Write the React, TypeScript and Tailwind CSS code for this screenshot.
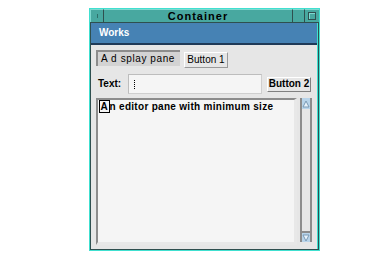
import React from "react";

export default function App() {
  const font = { fontFamily: '"Liberation Sans", "DejaVu Sans", sans-serif' };
  return (
    <div className="w-[379px] h-[255px] bg-white relative overflow-hidden" style={font}>
      <div className="absolute left-[89px] top-[8px] w-[231px] h-[243px] border border-[#40e0d0] bg-[#2f4f4f] flex flex-col">
        {/* title bar */}
        <div className="h-[14px] flex bg-[#48a8a0] border-b border-[#2f4f4f]">
          <div className="w-[14px] border-r border-[#2f4f4f] border-t border-t-[#7fd8d0] border-l border-l-[#7fd8d0] flex items-center justify-center">
            <div className="w-[1px] h-[4px] bg-[#2f6f6a]"></div>
          </div>
          <div className="flex-1 flex items-center justify-center border-t border-[#7fd8d0] border-r border-r-[#2f4f4f] text-[11px] font-bold text-black leading-none tracking-[1px]">
            Container
          </div>
          <div className="w-[12px] border-t border-[#7fd8d0] border-r border-r-[#2f4f4f]"></div>
          <div className="w-[14px] border-t border-[#7fd8d0] flex items-center justify-center">
            <div className="w-[8px] h-[8px] border border-[#2f4f4f] bg-[#48a8a0] shadow-[inset_1px_1px_0_#7fd8d0]"></div>
          </div>
        </div>
        {/* body */}
        <div className="flex-1 mx-[1px] mb-[1px] border-r border-[#40e0d0] bg-[#e6e6e6] flex flex-col">
          <div className="h-[22px] bg-[#4682b4] border-b-2 border-[#1f3a57] flex items-center pl-[8px] text-white text-[10px] font-bold leading-none">
            Works
          </div>
          <div className="flex-1 flex flex-col px-[5px] pt-[5px] pb-[4px]">
            <div className="flex items-start gap-[4px] h-[20px]">
              <div className="w-[84px] h-[16px] bg-[#d3d3d3] border-t-2 border-l-2 border-[#8c8c8c] flex items-center pl-[3px] text-[10px] text-black leading-none whitespace-nowrap overflow-hidden tracking-[0.6px]">
                A d splay pane
              </div>
              <div className="mt-[2px] w-[44px] h-[16px] bg-[#e6e6e6] border border-t-white border-l-white border-r-[#9a9a9a] border-b-[#9a9a9a] flex items-center justify-center text-[10px] text-black leading-none whitespace-nowrap">
                Button 1
              </div>
            </div>
            <div className="flex items-center h-[26px] mt-[1px]">
              <div className="w-[32px] pl-[2px] text-[10px] font-bold text-black leading-none">Text:</div>
              <div className="w-[134px] h-[20px] bg-[#f5f5f5] border border-[#cfcfcf] border-t-[#bdbdbd] border-l-[#bdbdbd] flex items-center pl-[5px]">
                <div className="w-[1px] h-[9px] border-l border-dotted border-black"></div>
              </div>
              <div className="ml-[5px] w-[44px] h-[15px] bg-[#e6e6e6] border border-t-white border-l-white border-r-[#808080] border-b-[#808080] flex items-center justify-center text-[10px] font-bold text-black leading-none whitespace-nowrap">
                Button 2
              </div>
            </div>
            <div className="flex-1 flex gap-[3px] mt-[1px]">
              <div className="w-[202px] bg-[#f5f5f5] border-t-2 border-l-2 border-[#8c8c8c] border-b-[3px] border-r-[3px] border-b-[#e8e8e8] border-r-[#e8e8e8] pl-[1px] pt-[2px]">
                <div className="text-[10px] font-bold text-black leading-none whitespace-nowrap tracking-[0.3px]">
                  <span className="border border-black px-[0.5px]">A</span>n editor pane with minimum size
                </div>
              </div>
              <div className="w-[12px] flex flex-col border-l-2 border-r-2 border-[#8c8c8c] bg-[#e6e6e6] mb-[3px]">
                <div className="h-[11px] bg-[#b8d4ea] flex items-center justify-center">
                  <svg width="8" height="8" viewBox="0 0 8 8"><path d="M4 1 L7 7 L1 7 Z" fill="#e8f2fa" stroke="#7a9ab5" strokeWidth="1" /></svg>
                </div>
                <div className="flex-1"></div>
                <div className="h-[11px] bg-[#b8d4ea] flex items-center justify-center border-t-2 border-[#8c8c8c]">
                  <svg width="8" height="8" viewBox="0 0 8 8"><path d="M1 1 L7 1 L4 7 Z" fill="#e8f2fa" stroke="#7a9ab5" strokeWidth="1" /></svg>
                </div>
              </div>
            </div>
          </div>
        </div>
      </div>
    </div>
  );
}
